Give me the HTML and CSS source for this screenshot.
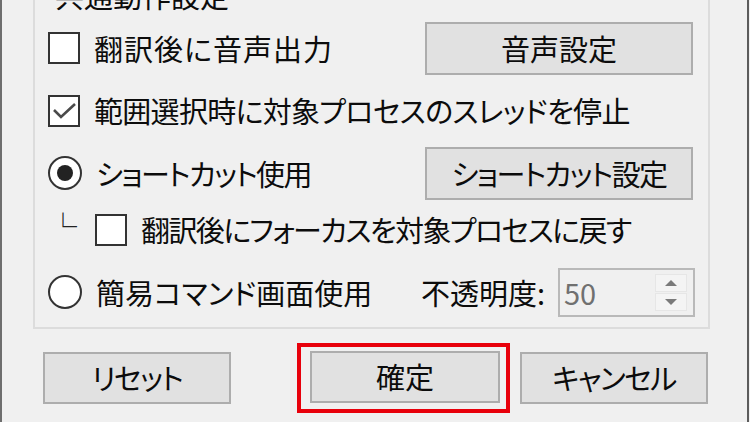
FILE: index.html
```html
<!DOCTYPE html>
<html lang="ja">
  <head>
    <meta charset="UTF-8" />
    <meta name="viewport" content="width=device-width, initial-scale=1.0" />
    <title>共通動作設定</title>
    <link rel="stylesheet" href="styles.css">
  </head>
  <body>
    <div class="window">
      <fieldset class="group">
        <legend>共通動作設定</legend>

        <!-- 音声 -->
        <div class="row row-btn">
          <label class="opt wide"><span class="box"></span>翻訳後に音声出力</label>
          <button type="button" class="btn btn-side">音声設定</button>
        </div>

        <!-- スレッド停止 -->
        <div class="row row-wide">
          <label class="opt tight-s">
            <span class="box">
              <svg width="28" height="28" viewBox="0 0 28 28"><polyline points="4,13 11,20 25,7" fill="none" stroke="#4a4a4a" stroke-width="2.6" /></svg>
            </span>範囲選択時に対象プロセスのスレッドを停止
          </label>
        </div>

        <!-- ショートカット -->
        <div class="row row-btn">
          <label class="opt tight"><span class="radio radio-on"></span>ショートカット使用</label>
          <button type="button" class="btn btn-side tight">ショートカット設定</button>
        </div>

        <div class="row row-sub">
          <span class="branch">└</span>
          <label class="opt tight"><span class="box"></span>翻訳後にフォーカスを対象プロセスに戻す</label>
        </div>

        <!-- 簡易コマンド -->
        <div class="row row-last">
          <label class="opt"><span class="radio"></span>簡易コマンド画面使用</label>
          <span class="opacity-label">不透明度:</span>
          <div class="spin">
            <span class="spin-value">50</span>
            <span class="spin-btns">
              <span class="spin-part"><span class="arrow-up"></span></span>
              <span class="spin-part"><span class="arrow-down"></span></span>
            </span>
          </div>
        </div>
      </fieldset>

      <div class="actions">
        <button type="button" class="btn btn-foot tight">リセット</button>
        <span class="highlight"><button type="button" class="btn btn-foot btn-ok">確定</button></span>
        <button type="button" class="btn btn-foot btn-cancel tight">キャンセル</button>
      </div>
    </div>
  </body>
</html>
```

FILE: styles.css
```css
html, body{
  margin:0;
  padding:0;
  background:#f0f0f0;
}

body{
  font-family:"Noto Sans CJK JP", sans-serif;
  font-size:29px;
  line-height:1.2;
  color:#0c0c0c;
  font-feature-settings:"palt";
  overflow:hidden;
}

.window{
  width:749px;
  height:422px;
  box-sizing:border-box;
  border-left:2px solid #6e6e6e;
  border-right:2px solid #5c5c5c;
  overflow:hidden;
}

/* グループボックス */
.group{
  margin:-22px 0 0 31px;
  width:677px;
  box-sizing:border-box;
  border:2px solid #dcdcdc;
  padding:9px 15px 10px 13px;
  min-width:0;
}

.group legend{
  padding:0 7px;
  line-height:1.2;
}

.row{
  display:flex;
  align-items:center;
}

.row-btn{ height:53px; }
.row-wide{ height:72px; }
.row-sub{ height:60px; }
.row-last{ height:49px; margin-top:8px; }

.opt{
  display:flex;
  align-items:center;
  gap:14px;
  white-space:nowrap;
}

/* かな幅の調整 */
.wide{ letter-spacing:1px; }
.tight-s{ letter-spacing:-0.7px; }
.tight{ letter-spacing:-1.6px; }

.box{
  width:32px;
  height:32px;
  box-sizing:border-box;
  border:2px solid #333;
  background:#fff;
  flex:none;
  display:flex;
  align-items:center;
  justify-content:center;
}

.radio{
  width:34px;
  height:34px;
  box-sizing:border-box;
  border:2px solid #333;
  border-radius:50%;
  background:#fff;
  flex:none;
  display:flex;
  align-items:center;
  justify-content:center;
}

.radio-on::after{
  content:'';
  width:16px;
  height:16px;
  border-radius:50%;
  background:#222;
}

.branch{
  width:47px;
  box-sizing:border-box;
  padding-left:1px;
  font-size:28px;
  font-feature-settings:normal;
  margin-top:-6px;
  color:#222;
  flex:none;
}

/* ボタン */
.btn{
  font:inherit;
  font-feature-settings:"palt";
  color:#0c0c0c;
  background:#e1e1e1;
  border:2px solid #adadad;
  padding:0;
  box-sizing:border-box;
}

.btn-side{
  margin-left:auto;
  width:268px;
  height:53px;
}

/* 不透明度 */
.opacity-label{
  margin-left:auto;
}

.spin{
  margin-left:13px;
  margin-right:-2px;
  width:137px;
  height:49px;
  box-sizing:border-box;
  border:2px solid #b9b9b9;
  display:flex;
  align-items:center;
  padding-left:4px;
}

.spin-value{
  color:#707070;
}

.spin-btns{
  margin-left:auto;
  margin-right:6px;
  width:32px;
  height:37px;
  display:flex;
  flex-direction:column;
  gap:1px;
}

.spin-part{
  flex:1;
  background:#f4f4f4;
  border:1px solid #e6e6e6;
  display:flex;
  align-items:center;
  justify-content:center;
}

.arrow-up{
  width:0;
  height:0;
  border-left:6px solid transparent;
  border-right:6px solid transparent;
  border-bottom:6px solid #7a7a7a;
}

.arrow-down{
  width:0;
  height:0;
  border-left:6px solid transparent;
  border-right:6px solid transparent;
  border-top:6px solid #7a7a7a;
}

/* 下部ボタン */
.actions{
  display:flex;
  align-items:center;
  margin-top:14px;
  padding-left:41px;
}

.btn-foot{
  width:188px;
  height:52px;
}

.highlight{
  display:block;
  margin-left:66px;
  border:4px solid #e8000b;
  padding:4px 6px 6px 9px;
}

.btn-ok{
  width:190px;
  display:block;
}

.btn-cancel{
  margin-left:10px;
}
```
